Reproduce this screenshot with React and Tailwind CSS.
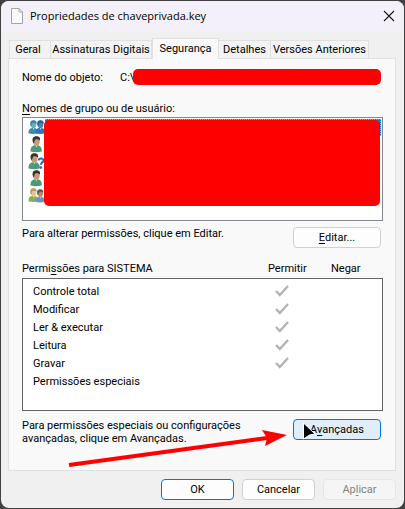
import React, { useState } from "react";

const tabs = [
  { name: "Geral", width: "w-[42px] pr-[4px]" },
  { name: "Assinaturas Digitais", width: "w-[101px]" },
  { name: "Segurança", width: "w-[67px]" },
  { name: "Detalhes", width: "w-[52px]" },
  { name: "Versões Anteriores", width: "w-[98px]" },
];

const principals = [
  { id: 1, kind: "group" },
  { id: 2, kind: "user" },
  { id: 3, kind: "unknown" },
  { id: 4, kind: "user" },
  { id: 5, kind: "couple" },
];

const permissions = [
  { name: "Controle total", allow: true },
  { name: "Modificar", allow: true },
  { name: "Ler & executar", allow: true },
  { name: "Leitura", allow: true },
  { name: "Gravar", allow: true },
  { name: "Permissões especiais", allow: false },
];

const buttonBase = "h-[21px] shrink-0 rounded-[4px] border text-center leading-[19px]";

const Person = ({ x = 0, y = 0, skin, hair, shirt, scale = 1 }) => (
  <g transform={`translate(${x} ${y}) scale(${scale})`}>
    <path d="M0.5 15.5 C0.3 11.5 2 10 4.5 9.3 L8 9.3 C10.8 10 12 11.8 11.8 15.5 C8 16.6 4 16.6 0.5 15.5Z" fill={shirt} />
    <path d="M5.2 8.5 L6.4 11.2 L7.7 8.5Z" fill="#e8efe9" />
    <ellipse cx="6.4" cy="5.3" rx="3.3" ry="4.4" fill={skin} />
    <path d="M2.8 5.8 C1.8 1.8 3.8 0.2 6.6 0.2 C9.6 0.2 10.6 2.4 9.9 4.6 C8.6 3.2 6.8 3.2 5.2 3.6 C4.6 5 4.2 6.6 3.6 7.6Z" fill={hair} />
  </g>
);

const PrincipalIcon = ({ kind }) => (
  <svg viewBox="0 0 17 17" className="h-[17px] w-[17px] shrink-0" aria-hidden="true">
    {kind === "group" && (
      <>
        <Person y={1} scale={0.86} skin="#6fadc2" hair="#3f86a3" shirt="#3c8cab" />
        <Person x={7} y={1} scale={0.86} skin="#4a86bd" hair="#2560a0" shirt="#2478c4" />
      </>
    )}
    {kind === "user" && <Person x={2} skin="#c79a78" hair="#39322d" shirt="#4d9a78" />}
    {kind === "unknown" && (
      <>
        <Person x={0} skin="#c79a78" hair="#39322d" shirt="#4d9a78" />
        <path d="M10.8 7.3 C11 5 15.4 4.8 15.4 7.4 C15.4 9.4 12.9 9.4 12.9 11.8" fill="none" stroke="#fff" strokeWidth="2.8" />
        <path d="M10.8 7.3 C11 5 15.4 4.8 15.4 7.4 C15.4 9.4 12.9 9.4 12.9 11.8" fill="none" stroke="#1f6db5" strokeWidth="2" />
        <circle cx="12.9" cy="14.6" r="1.3" fill="#1f6db5" />
      </>
    )}
    {kind === "couple" && (
      <>
        <Person y={1} scale={0.86} skin="#e3c3a0" hair="#b3a25c" shirt="#8fae4b" />
        <Person x={7} y={2} scale={0.82} skin="#b98962" hair="#6b5340" shirt="#6a94c4" />
      </>
    )}
  </svg>
);

const Tick = ({ label }) => (
  <label className="grid justify-items-start">
    <input type="checkbox" checked readOnly disabled aria-label={label} className="col-start-1 row-start-1 h-[14px] w-[14px] appearance-none" />
    <svg viewBox="0 0 14 14" className="col-start-1 row-start-1 h-[14px] w-[14px]" aria-hidden="true">
      <path d="M1 7 L4.8 11 L13 2" fill="none" stroke="#b3b3b3" strokeWidth="2.4" />
    </svg>
  </label>
);

const App = () => {
  const [activeTab, setActiveTab] = useState("Segurança");

  return (
    <div className="w-full bg-[#414141] px-px pt-px pb-px font-['Roboto','Liberation_Sans',sans-serif] text-[11px] leading-[13px] text-black">
      <div className="overflow-hidden rounded-[8px] bg-[#f0f0f0]">
        {/* Title bar */}
        <header className="flex h-[30px] items-center bg-[#f3f0f9] pr-[9px] pl-[10px]">
          <svg viewBox="0 0 12 16" className="h-4 w-3" aria-hidden="true">
            <path d="M0.5 0.5 H8 L11.5 4 V15.5 H0.5Z" fill="#fafafa" stroke="#a3a3a3" />
            <path d="M8 0.5 V4 H11.5" fill="none" stroke="#a3a3a3" />
          </svg>
          <h1 className="ml-[7px] flex-1 font-['Open_Sans','Noto_Sans',sans-serif] text-[11px] leading-4">
            Propriedades de chaveprivada.key
          </h1>
          <button type="button" aria-label="Fechar">
            <svg viewBox="0 0 12 12" className="h-3 w-3" aria-hidden="true">
              <path d="M1 1 L11 11 M11 1 L1 11" stroke="#1a1a1a" strokeWidth="1.1" />
            </svg>
          </button>
        </header>

        <main className="px-[7px] pt-[7px]">
          {/* Tabs */}
          <div role="tablist" className="flex items-end pl-px">
            {tabs.map(({ name, width }) => (
              <button
                key={name}
                type="button"
                role="tab"
                aria-selected={activeTab === name}
                onClick={() => setActiveTab(name)}
                className={`${width} text-center whitespace-nowrap ${
                  activeTab === name
                    ? "relative z-10 -mb-px h-[21px] border border-b-0 border-[#e0e0e0] bg-[#f9f9f9] pb-[2px]"
                    : "h-[18px] border-t border-r border-[#e0e0e0] bg-[#f3f3f3] first:border-l"
                }`}
              >
                {name}
              </button>
            ))}
          </div>

          <section className="relative mr-px border border-[#e0e0e0] bg-[#f9f9f9] pt-[10px] pr-[12px] pb-[25px] pl-[13px]">
            <div className="flex h-4 items-center">
              <span className="w-[98px]">Nome do objeto:</span>
              <span className="w-[13px] whitespace-nowrap">C:\</span>
              <span className="relative mr-[2px] h-4 flex-1 rounded-[5px] bg-[#ff0000]" />
            </div>

            <h2 id="principals" className="mt-[17px] h-[15px]">
              <u className="underline-offset-2">N</u>omes de grupo ou de usuário:
            </h2>
            <div className="relative border border-[#828790] bg-white px-px pt-px pb-[16px]">
              <ul role="listbox" aria-labelledby="principals">
                {principals.map((item, index) => (
                  <li key={item.id} role="option" aria-selected={index === 0} className="flex pl-[4px]">
                    <PrincipalIcon kind={item.kind} />
                    <span className={index === 0 ? "flex-1 border border-dotted border-[#ff8728] bg-[#0078d7]" : "flex-1"} />
                  </li>
                ))}
              </ul>
              <div className="absolute top-[2px] right-[2px] left-[21px] h-[86px] rounded-[5px] bg-[#ff0000]" />
            </div>

            <div className="mt-[6px] flex items-start justify-between pr-[2px]">
              <p>Para alterar permissões, clique em Editar.</p>
              <button type="button" className={`${buttonBase} w-[88px] border-[#d0d0d0] bg-[#fdfdfd]`}>
                <u className="underline-offset-2">E</u>ditar...
              </button>
            </div>

            {/* Permissions */}
            <table className="mt-[14px] block">
              <thead className="block">
                <tr className="grid h-4 grid-cols-[1fr_63px_52px]">
                  <th className="text-left font-normal">
                    Permi<u className="underline-offset-2">s</u>sões para SISTEMA
                  </th>
                  <th className="text-left font-normal">Permitir</th>
                  <th className="text-left font-normal">Negar</th>
                </tr>
              </thead>
              <tbody className="block border border-[#646464] bg-white pt-[3px] pb-[20px]">
                {permissions.map((permission) => (
                  <tr key={permission.name} className="grid h-[18px] grid-cols-[1fr_63px_51px] items-center">
                    <td className="pl-[10px]">{permission.name}</td>
                    <td className="pl-[7px]">{permission.allow && <Tick label={`Permitir ${permission.name}`} />}</td>
                    <td />
                  </tr>
                ))}
              </tbody>
            </table>

            <div className="mt-[8px] flex items-start justify-between pr-[2px]">
              <p className="max-w-[230px]">Para permissões especiais ou configurações avançadas, clique em Avançadas.</p>
              <button type="button" className={`${buttonBase} relative w-[88px] border-[#0078d4] bg-[#e0eef9]`}>
                A<u className="underline-offset-2">v</u>ançadas
                {/* Mouse pointer */}
                <svg viewBox="0 0 14 18" className="absolute top-[2px] left-[8px] h-[18px] w-[14px]" aria-hidden="true">
                  <path d="M1.5 1 L13 12 L7.5 13 L1.5 17Z" fill="#000" stroke="#fff" strokeWidth="1" />
                </svg>
              </button>
            </div>

            <svg viewBox="0 0 222 38" className="pointer-events-none absolute right-[106px] bottom-[2px] h-[38px] w-[222px]" aria-hidden="true">
              <path d="M2 35 L200 8" stroke="#ff0000" strokeWidth="4" />
              <path d="M220 5 L195 0 L200 8 L198 16Z" fill="#ff0000" />
            </svg>
          </section>
        </main>

        <footer className="flex justify-end gap-2 pt-[8px] pr-[8px] pb-[8px]">
          <button type="button" className={`${buttonBase} w-[73px] border-[#0078d4] bg-[#fdfdfd]`}>
            OK
          </button>
          <button type="button" className={`${buttonBase} w-[73px] border-[#d0d0d0] bg-[#fdfdfd]`}>
            Cancelar
          </button>
          <button type="button" disabled className={`${buttonBase} w-[73px] border-[#e6e6e6] bg-[#f5f5f5] text-[#838383]`}>
            Ap<u className="underline-offset-2">l</u>icar
          </button>
        </footer>
      </div>
    </div>
  );
};

export default App;
